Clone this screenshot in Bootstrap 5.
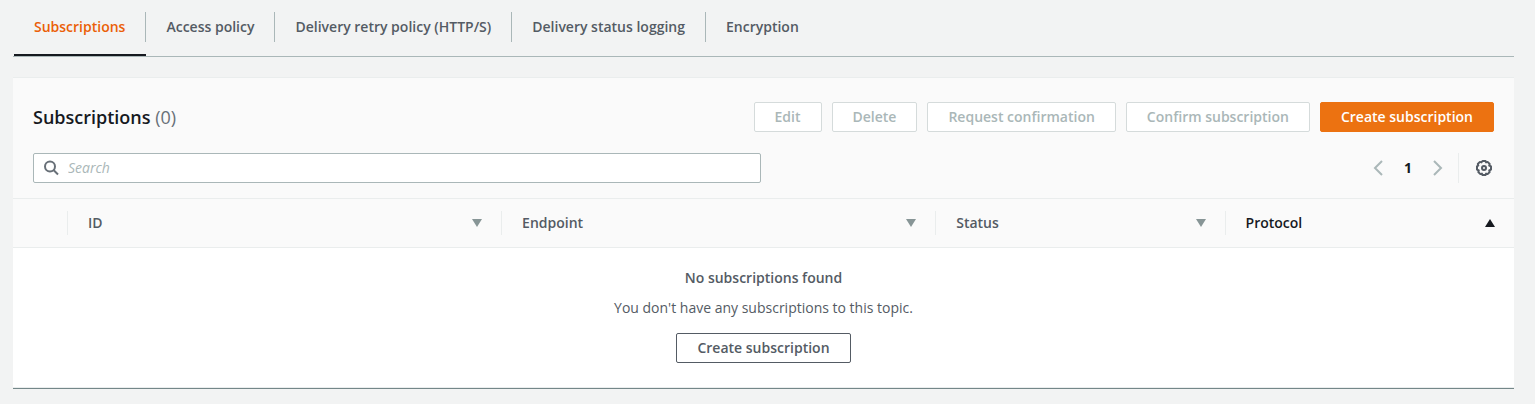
<!DOCTYPE html>
<html lang="en">
<head>
<meta charset="utf-8">
<meta name="viewport" content="width=device-width, initial-scale=1">
<title>Subscriptions</title>
<link href="https://cdn.jsdelivr.net/npm/bootstrap@5.3.0/dist/css/bootstrap.min.css" rel="stylesheet">
<style>
  body { background: #f2f3f3; color: #545b64; font: 14px/20px "Open Sans", "Noto Sans", sans-serif; }
  .page { padding: 0 21px 15px 13px; }
  .topic-tabs { border-bottom: 1px solid #aab7b8; padding: 12px 0 0 1px; }
  .topic-tabs .nav-link { color: #545b64; font-weight: 600; line-height: 20px; padding: 5px 20px; margin-bottom: 12px; border-right: 1px solid #aab7b8; border-radius: 0; }
  .topic-tabs .nav-item:last-child .nav-link { border-right: 0; }
  .topic-tabs .nav-item { border-bottom: 2px solid transparent; }
  .topic-tabs .nav-item.current { border-bottom-color: #16191f; }
  .topic-tabs .nav-link.active { color: #eb5f07; }
  .panel { background: #fff; margin-top: 20px; border-top: 1px solid #eaeded; border-bottom: 1px solid #748789; }
  .panel-head { background: #fafafa; padding: 24px 20px 15px; }
  h2 { font-size: 18px; line-height: 30px; font-weight: 600; color: #16191f; }
  h2 span { font-weight: 400; color: #687078; }
  .btn { --bs-btn-font-size: 14px; --bs-btn-font-weight: 600; --bs-btn-line-height: 20px; --bs-btn-padding-y: 4px; --bs-btn-padding-x: 20px; --bs-btn-border-radius: 2px; --bs-btn-disabled-opacity: 1; }
  .btn-plain { --bs-btn-color: #545b64; --bs-btn-bg: #fff; --bs-btn-border-color: #545b64; --bs-btn-hover-color: #16191f; --bs-btn-hover-bg: #fafafa; --bs-btn-hover-border-color: #16191f; --bs-btn-disabled-color: #aab7b8; --bs-btn-disabled-bg: #fff; --bs-btn-disabled-border-color: #d5dbdb; }
  .btn-create { --bs-btn-color: #fff; --bs-btn-bg: #ec7211; --bs-btn-border-color: #ec7211; --bs-btn-hover-color: #fff; --bs-btn-hover-bg: #eb5f07; --bs-btn-hover-border-color: #eb5f07; }
  .btn-plain, .btn-create { white-space: nowrap; }
  .actions { gap: 10px; }
  .search-row { margin-top: 21px; }
  .search { flex: 0 1 728px; height: 30px; background: #fff; border: 1px solid #aab7b8; border-radius: 2px; padding: 0 9px; gap: 9px; }
  .search input { font-size: 14px; line-height: 20px; color: #16191f; min-width: 0; outline: 0; }
  .search input::placeholder { color: #aab7b8; font-style: italic; opacity: 1; }
  .icon-btn { background: none; border: 0; padding: 0; width: 20px; height: 20px; }
  .page-now { color: #16191f; }
  .pager { gap: 10px; }
  .pager-rule { border-left: 1px solid #eaeded; height: 30px; margin-right: 5px; }
  .subs { table-layout: fixed; width: 100%; border-bottom: 1px solid #eaeded; }
  .subs thead { background: #fafafa; border-top: 1px solid #eaeded; border-bottom: 1px solid #eaeded; }
  .subs th { padding: 12px 0; font-weight: 600; }
  .subs th > div { height: 24px; padding: 0 18px 0 20px; }
  .subs th + th > div { border-left: 1px solid #eaeded; }
  .subs .sorted { color: #16191f; }
  .col-pick { width: 54px; }
  .col-wide { width: 30%; }
  .col-mid { width: 20%; }
  .subs td { padding: 20px 20px 24px; text-align: center; }
  .subs td p { margin: 10px 0 15px; }
</style>
</head>
<body>
<main class="page">
  <ul class="nav topic-tabs">
    <li class="nav-item current"><a class="nav-link active" aria-current="page" href="#subscriptions">Subscriptions</a></li>
    <li class="nav-item"><a class="nav-link" href="#access">Access policy</a></li>
    <li class="nav-item"><a class="nav-link" href="#retry">Delivery retry policy (HTTP/S)</a></li>
    <li class="nav-item"><a class="nav-link" href="#logging">Delivery status logging</a></li>
    <li class="nav-item"><a class="nav-link" href="#encryption">Encryption</a></li>
  </ul>

  <section class="panel" id="subscriptions">
    <div class="panel-head">
      <div class="d-flex flex-wrap justify-content-between">
        <h2 class="m-0">Subscriptions <span>(0)</span></h2>
        <div class="d-flex flex-wrap actions">
          <button type="button" class="btn btn-plain" disabled>Edit</button>
          <button type="button" class="btn btn-plain" disabled>Delete</button>
          <button type="button" class="btn btn-plain" disabled>Request confirmation</button>
          <button type="button" class="btn btn-plain" disabled>Confirm subscription</button>
          <button type="button" class="btn btn-create">Create subscription</button>
        </div>
      </div>
      <div class="d-flex justify-content-between align-items-center search-row">
        <label class="search d-flex align-items-center" for="subscription-search">
          <svg width="16" height="16" viewBox="0 0 16 16" fill="none" stroke="#687078" stroke-width="2" aria-hidden="true"><circle cx="7" cy="6.5" r="5"/><path d="M10.5 10l4.5 4.5"/></svg>
          <input type="search" id="subscription-search" aria-label="Search subscriptions" class="border-0 p-0 flex-grow-1 bg-transparent" placeholder="Search">
        </label>
        <div class="d-flex align-items-center pager">
          <button type="button" class="icon-btn d-flex align-items-center justify-content-center" aria-label="Previous page" disabled><svg width="16" height="16" viewBox="0 0 16 16" fill="none" stroke="#aab7b8" stroke-width="2"><path d="M12 1L5 8l7 7"/></svg></button>
          <button type="button" class="icon-btn fw-bold page-now" aria-label="Page 1">1</button>
          <button type="button" class="icon-btn d-flex align-items-center justify-content-center" aria-label="Next page" disabled><svg width="16" height="16" viewBox="0 0 16 16" fill="none" stroke="#aab7b8" stroke-width="2"><path d="M4 1l7 7-7 7"/></svg></button>
          <span class="pager-rule"></span>
          <button type="button" class="icon-btn d-flex align-items-center justify-content-center" aria-label="Preferences"><svg width="16" height="16" viewBox="0 0 16 16" fill="none" stroke="#545b64" stroke-width="2" stroke-linejoin="round"><path d="M6.500 1h3l.6 1.400 1.500-.5 2.100 2.100-.5 1.500 1.800.9v3.200l-1.800.9.5 1.500-2.100 2.100-1.500-.5-.6 1.400h-3l-.6-1.400-1.500.5-2.100-2.100.5-1.500L1 9.600V6.400l1.300-.9-.5-1.500 2.100-2.100 1.500.5z"/><circle cx="8" cy="8" r="2"/></svg></button>
        </div>
      </div>
    </div>
    <table class="subs">
      <colgroup><col class="col-pick"><col class="col-wide"><col class="col-wide"><col class="col-mid"><col class="col-mid"></colgroup>
      <thead>
        <tr>
          <th scope="col" aria-label="Select"></th>
          <th scope="col"><div class="d-flex align-items-center justify-content-between">ID <svg width="12" height="10" viewBox="0 0 12 10" fill="#879596" aria-hidden="true"><path d="M1 1h10L6 9z"/></svg></div></th>
          <th scope="col"><div class="d-flex align-items-center justify-content-between">Endpoint <svg width="12" height="10" viewBox="0 0 12 10" fill="#879596" aria-hidden="true"><path d="M1 1h10L6 9z"/></svg></div></th>
          <th scope="col"><div class="d-flex align-items-center justify-content-between">Status <svg width="12" height="10" viewBox="0 0 12 10" fill="#879596" aria-hidden="true"><path d="M1 1h10L6 9z"/></svg></div></th>
          <th scope="col" class="sorted" aria-sort="ascending"><div class="d-flex align-items-center justify-content-between">Protocol <svg width="12" height="10" viewBox="0 0 12 10" fill="#16191f" aria-hidden="true"><path d="M1 9h10L6 1z"/></svg></div></th>
        </tr>
      </thead>
      <tbody>
        <tr>
          <td colspan="5">
            <div class="fw-semibold">No subscriptions found</div>
            <p>You don't have any subscriptions to this topic.</p>
            <button type="button" class="btn btn-plain">Create subscription</button>
          </td>
        </tr>
      </tbody>
    </table>
  </section>
</main>
<script src="https://cdn.jsdelivr.net/npm/bootstrap@5.3.0/dist/js/bootstrap.bundle.min.js"></script>
</body>
</html>
